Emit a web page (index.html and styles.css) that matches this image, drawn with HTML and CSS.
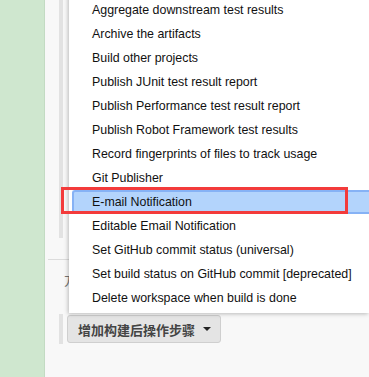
FILE: index.html
```html
<!DOCTYPE html>
<html lang="zh-CN">
<head>
    <meta charset="UTF-8">
    <title>增加构建后操作步骤</title>
    <link rel="stylesheet" href="styles.css">
</head>
<body>
    <aside class="sidebar"></aside>
    <main class="content">
        <div class="section"></div>
        <div class="divider"></div>
        <div class="label">方</div>
        <div class="button-row">
            <button class="add-step">增加构建后操作步骤 <span class="caret"></span></button>
        </div>

        <ul class="menu">
            <li>Aggregate downstream test results</li>
            <li>Archive the artifacts</li>
            <li>Build other projects</li>
            <li>Publish JUnit test result report</li>
            <li>Publish Performance test result report</li>
            <li>Publish Robot Framework test results</li>
            <li>Record fingerprints of files to track usage</li>
            <li>Git Publisher</li>
            <li class="active">E-mail Notification</li>
            <li>Editable Email Notification</li>
            <li>Set GitHub commit status (universal)</li>
            <li>Set build status on GitHub commit [deprecated]</li>
            <li>Delete workspace when build is done</li>
        </ul>
    </main>
    <div class="mark"></div>
</body>
</html>
```

FILE: styles.css
```css
html {
    overflow: hidden;
}

body {
    margin: 0;
    height: 377px;
    overflow: hidden;
    display: flex;
    background-color: #f8f8f8;
    font-family: "Liberation Sans", Arial, sans-serif;
    position: relative;
}

.sidebar {
    width: 44px;
    flex-shrink: 0;
    background-color: #cfe7cf;
    border-right: 1px solid #c3dbc3;
}

.content {
    flex: 1;
    position: relative;
    padding-left: 14px;
}

.section {
    height: 238px;
    border-left: 4px solid #e2e2e2;
}

.divider {
    margin: 21px 0 0 -11px;
    border-top: 1px solid #dcdcdc;
}

.label {
    height: 34px;
    padding: 10px 0 0 5px;
    box-sizing: border-box;
    font-size: 13px;
    color: #777;
    font-family: "Noto Sans CJK SC", sans-serif;
}

.button-row {
    margin-top: 20px;
    height: 30px;
    border-left: 4px solid #e2e2e2;
    padding: 1px 0 0 4px;
    box-sizing: border-box;
}

.add-step {
    height: 28px;
    width: 154px;
    padding: 0 0 0 10px;
    display: flex;
    align-items: center;
    gap: 8px;
    background-color: #e4e4e4;
    border: 1px solid #cfcfcf;
    border-radius: 3px;
    font-family: "Noto Sans CJK SC", sans-serif;
    font-size: 13px;
    font-weight: bold;
    color: #444;
}

.caret {
    width: 0;
    height: 0;
    border-left: 4px solid transparent;
    border-right: 4px solid transparent;
    border-top: 4px solid #222;
}

.menu {
    position: absolute;
    left: 24px;
    right: 0;
    top: -6px;
    margin: 0;
    padding: 4px 0 3px;
    list-style: none;
    background-color: #fff;
    box-shadow: -1px 1px 4px rgba(0, 0, 0, 0.25);
}

.menu li {
    height: 24px;
    line-height: 24px;
    padding-left: 23px;
    font-size: 12.4px;
    color: #111;
    white-space: nowrap;
    overflow: hidden;
}

.menu li.active {
    margin-left: 3px;
    padding-left: 18px;
    height: 20px;
    line-height: 20px;
    background-color: #b3d4fc;
    border: 2px solid #86b2f5;
    border-right: none;
    border-radius: 3px 0 0 3px;
}

.mark {
    position: absolute;
    left: 61px;
    top: 187px;
    width: 281px;
    height: 21px;
    border: 3px solid #f33b3b;
}
```
